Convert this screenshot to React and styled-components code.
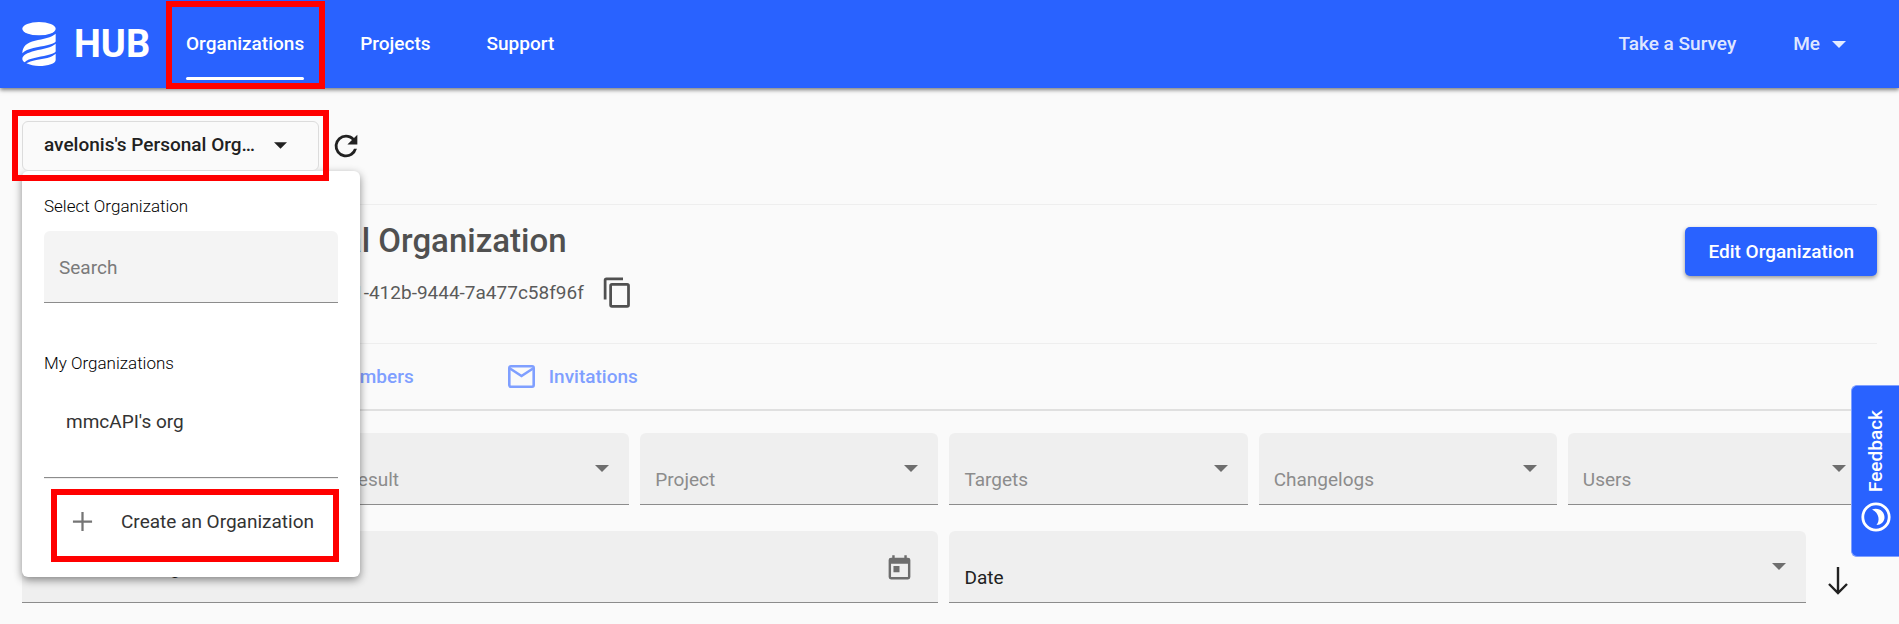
import React from "react";
import styled, { createGlobalStyle, css } from "styled-components";

const blue = "#2962ff";

const GlobalStyle = createGlobalStyle`
  * { box-sizing: border-box; }
  body {
    margin: 0;
    background: #fafafa;
    color: #212121;
    font-family: Roboto, "Liberation Sans", sans-serif;
    font-size: 19px;
    line-height: 24px;
    overflow-x: hidden;
  }
  button, input, select { font: inherit; color: inherit; }
  button { cursor: pointer; }
`;

const highlight = css`
  position: relative;
  &::after {
    content: "";
    position: absolute;
    inset: ${(p) => p.$ring};
    border: 6px solid #ff0000;
    pointer-events: none;
    z-index: 5;
  }
`;

const Header = styled.header`
  display: flex;
  align-items: center;
  height: 88px;
  padding: 0 53px 0 22px;
  background: ${blue};
  color: #fff;
  box-shadow: 0 2px 4px rgba(0, 0, 0, 0.5);
  font-weight: 500;
`;

const Brand = styled.a`
  display: flex;
  align-items: center;
  gap: 18px;
  width: 164px;
  color: inherit;
  text-decoration: none;
  font-size: 38px;
  line-height: 44px;
  font-weight: 700;
`;

const Nav = styled.nav`
  display: flex;
  flex: 1;
  gap: 56px;
`;

const NavLink = styled.a`
  display: flex;
  align-items: center;
  height: 88px;
  color: inherit;
  text-decoration: none;
  ${(p) => p.$ring && highlight}
  ${(p) =>
    p.$active &&
    css`
      &::before {
        content: "";
        position: absolute;
        left: 0;
        right: 0;
        bottom: 8px;
        height: 3px;
        border-radius: 2px;
        background: #fff;
      }
    `}
`;

const Account = styled.div`
  display: flex;
  align-items: center;
  gap: 57px;
  color: rgba(255, 255, 255, 0.87);
`;

const AccountButton = styled.button`
  display: flex;
  align-items: center;
  gap: 12px;
  padding: 0;
  border: 0;
  background: none;
`;

const Page = styled.main`
  padding: 33px 22px 20px;
`;

const Toolbar = styled.div`
  display: flex;
  align-items: center;
  gap: 10px;
  height: 83px;
  padding-bottom: 33px;
  position: relative;
`;

const OrgPicker = styled.div`
  ${highlight}
  z-index: 4;
`;

const OrgButton = styled.button`
  display: flex;
  align-items: center;
  gap: 17px;
  width: 297px;
  height: 50px;
  padding: 0 22px 2px 21px;
  border: 1px solid #dcdcdc;
  border-radius: 6px;
  background: #fafafa;
  font-weight: 500;
`;

const OrgName = styled.span`
  width: 213px;
  overflow: hidden;
  text-overflow: ellipsis;
  white-space: nowrap;
  text-align: left;
`;

const IconButton = styled.button`
  display: flex;
  padding: 0;
  border: 0;
  background: none;
  color: ${(p) => p.$color || "#212121"};
`;

const Menu = styled.section`
  position: absolute;
  top: 50px;
  left: 0;
  z-index: 3;
  width: 338px;
  height: 406px;
  padding: 22px;
  border-radius: 6px;
  background: #fff;
  box-shadow: 0 3px 8px rgba(0, 0, 0, 0.45);
  color: #333;
`;

const MenuHeading = styled.h2`
  margin: 0;
  padding-top: 1px;
  font-size: 17px;
  line-height: 24px;
  font-weight: 300;
  color: #000;
`;

const SearchInput = styled.input`
  display: block;
  width: 100%;
  height: 72px;
  margin: 13px 0 47px;
  padding: 2px 15px 0;
  border: 0;
  border-bottom: 1px solid #8c8c8c;
  border-radius: 6px 6px 0 0;
  background: #f4f4f4;
  outline: 0;
  &::placeholder {
    color: #7a7a7a;
    opacity: 1;
  }
`;

const MenuItem = styled.button`
  display: block;
  width: 100%;
  height: 68px;
  margin: 13px 0 21px;
  padding: 0 22px;
  border: 0;
  background: none;
  text-align: left;
`;

const MenuRule = styled.hr`
  margin: 0;
  height: 2px;
  border: 0;
  border-top: 1px solid #8c8c8c;
  border-bottom: 1px solid #eee;
`;

const CreateItem = styled.button`
  display: flex;
  align-items: center;
  gap: 25px;
  height: 62px;
  width: 276px;
  margin: 15px 0 0 13px;
  padding: 0 0 7px 12px;
  border: 0;
  background: none;
  white-space: nowrap;
  ${highlight}
`;

const Summary = styled.section`
  display: flex;
  justify-content: space-between;
  align-items: flex-start;
  height: 139px;
  padding: 16px 0 0 66px;
  border-top: 1px solid #eee;
`;

const Title = styled.h1`
  margin: 0;
  font-size: 33px;
  line-height: 40px;
  font-weight: 500;
  color: #505050;
`;

const OrgId = styled.div`
  display: flex;
  align-items: center;
  gap: 17px;
  padding: 15px 0 0 148px;
  color: #5a5a5a;
`;

const EditButton = styled.button`
  height: 49px;
  margin-top: 6px;
  padding: 0 23px;
  border: 0;
  border-radius: 5px;
  background: ${blue};
  color: #fff;
  font-weight: 500;
  box-shadow: 0 2px 4px rgba(0, 0, 0, 0.4);
`;

const Tabs = styled.nav`
  display: flex;
  align-items: center;
  gap: 94px;
  height: 68px;
  padding-left: 270px;
  border-top: 1px solid #eee;
  border-bottom: 2px solid #e0e0e0;
`;

const Tab = styled.a`
  display: flex;
  align-items: center;
  gap: 14px;
  color: #7f9fff;
  font-weight: 500;
  text-decoration: none;
`;

const Filters = styled.form`
  display: grid;
  grid-template-columns: repeat(6, 1fr);
  gap: 26px 11px;
  padding: 22px 11px 0 0;
`;

const Field = styled.label`
  display: grid;
  align-items: center;
  flex: 1;
  height: 72px;
  border-bottom: 1px solid #8c8c8c;
  border-radius: 6px 6px 0 0;
  background: #efefef;
  > * { grid-area: 1 / 1; }
  > svg, > button {
    justify-self: end;
    margin-right: ${(p) => (p.$wide ? 24 : 20)}px;
  }
  > button { padding-top: 4px; }
`;

const Select = styled.select`
  appearance: none;
  width: 100%;
  height: 100%;
  padding: 22px 50px 0 15px;
  border: 0;
  background: none;
  outline: 0;
  color: ${(p) => (p.$filled ? "#212121" : "#8c8c8c")};
`;

const DateInput = styled.input`
  width: 100%;
  height: 100%;
  padding: 2px 15px 0;
  border: 0;
  background: none;
  outline: 0;
`;

const DateRange = styled.div`
  grid-column: span 3;
`;

const SortGroup = styled.div`
  grid-column: span 3;
  display: flex;
  align-items: center;
  gap: 22px;
  padding-right: 18px;
`;

const SortButton = styled(IconButton)`
  padding-top: 27px;
`;

const Feedback = styled.button`
  position: fixed;
  top: 385px;
  right: 0;
  z-index: 6;
  display: flex;
  flex-direction: column;
  align-items: center;
  gap: 10px;
  width: 48px;
  padding: 24px 0 24px;
  border: 1px solid #7f9fff;
  border-right: 0;
  border-radius: 6px 0 0 6px;
  background: ${blue};
  color: #fff;
  font-weight: 500;
`;

const Vertical = styled.span`
  writing-mode: vertical-rl;
  transform: rotate(180deg);
`;

const Caret = ({ width = 14, color = "currentColor" }) => (
  <svg width={width} height="7" viewBox="0 0 14 7" fill={color} aria-hidden="true">
    <path d="M0 0h14L7 7z" />
  </svg>
);

const Logo = () => (
  <svg width="34" height="44" viewBox="0 0 100 132" fill="#fff" aria-hidden="true">
    <ellipse cx="50" cy="20" rx="50" ry="20" />
    <path d="M100 35C88 47 62 50 38 56C14 62 0 72 0 94C14 78 50 76 74 70C90 66 100 62 100 58Z" />
    <path d="M100 65C88 77 62 80 38 86C14 92 0 100 0 110C0 115 3 118 7 121C20 108 50 106 74 100C90 96 100 92 100 88Z" />
    <path d="M100 95C88 107 64 110 42 114C28 117 19 120 12 124C22 129 37 132 50 132C78 132 100 125 100 114Z" />
  </svg>
);

const Refresh = () => (
  <svg width="34" height="34" viewBox="0 0 24 24" fill="currentColor" aria-hidden="true">
    <path d="M17.65 6.35A7.96 7.96 0 0 0 12 4a8 8 0 1 0 7.73 10h-2.08A6 6 0 1 1 12 6c1.66 0 3.14.69 4.22 1.78L13 11h7V4z" />
  </svg>
);

const Copy = () => (
  <svg width="33" height="33" viewBox="0 0 24 24" fill="currentColor" aria-hidden="true">
    <path d="M16 1H4a2 2 0 0 0-2 2v14h2V3h12zm3 4H8a2 2 0 0 0-2 2v14a2 2 0 0 0 2 2h11a2 2 0 0 0 2-2V7a2 2 0 0 0-2-2m0 16H8V7h11z" />
  </svg>
);

const Mail = () => (
  <svg width="27" height="23" viewBox="0 0 27 23" fill="none" stroke="currentColor" strokeWidth="2.6" aria-hidden="true">
    <rect x="1.3" y="1.3" width="24.4" height="20.4" rx="1.6" />
    <path d="M2 3.5L13.5 11L25 3.5" />
  </svg>
);

const Calendar = () => (
  <svg width="29" height="29" viewBox="0 0 24 24" fill="currentColor" aria-hidden="true">
    <path d="M19 3h-1V1h-2v2H8V1H6v2H5a2 2 0 0 0-2 2v14a2 2 0 0 0 2 2h14a2 2 0 0 0 2-2V5a2 2 0 0 0-2-2m0 16H5V8h14zM7 10h5v5H7z" />
  </svg>
);

const Plus = () => (
  <svg width="27" height="27" viewBox="0 0 24 24" fill="#757575" aria-hidden="true">
    <path d="M20.5 13H13v7.500h-2V13H3.500v-2H11V3.500h2V11h7.500z" />
  </svg>
);

const ArrowDown = () => (
  <svg width="20" height="28" viewBox="0 0 20 28" fill="none" stroke="currentColor" strokeWidth="2.400" aria-hidden="true">
    <path d="M10 0V26M1 17L10 26L19 17" />
  </svg>
);

const Moon = () => (
  <svg width="30" height="30" viewBox="0 0 30 30" aria-hidden="true">
    <circle cx="15" cy="15" r="13.200" fill="none" stroke="#fff" strokeWidth="2.800" />
    <path d="M11 7.500C18 5 24 10 23.500 16C23 20 20 23 15.500 23C19 19 18.500 11 11 7.500Z" fill="#fff" />
  </svg>
);

const filters = ["Type", "Result", "Project", "Targets", "Changelogs", "Users"];

function FilterSelect({ name, filled }) {
  return (
    <Field>
      <Select aria-label={name} $filled={filled} defaultValue={name}>
        <option>{name}</option>
      </Select>
      <Caret color="#6e6e6e" />
    </Field>
  );
}

export default function App() {
  return (
    <>
      <GlobalStyle />
      <Header>
        <Brand href="#">
          <Logo />
          HUB
        </Brand>
        <Nav>
          <NavLink href="#organizations" $active $ring="1px -21px -1px -20px">
            Organizations
          </NavLink>
          <NavLink href="#projects">Projects</NavLink>
          <NavLink href="#support">Support</NavLink>
        </Nav>
        <Account>
          <NavLink href="#survey">Take a Survey</NavLink>
          <AccountButton>
            Me
            <Caret />
          </AccountButton>
        </Account>
      </Header>
      <Page>
        <Toolbar>
          <OrgPicker $ring="-11px -10px -10px -10px">
            <OrgButton>
              <OrgName>avelonis's Personal Organization</OrgName>
              <Caret width={13} />
            </OrgButton>
          </OrgPicker>
          <IconButton aria-label="Refresh">
            <Refresh />
          </IconButton>
          <Menu>
            <MenuHeading>Select Organization</MenuHeading>
            <SearchInput aria-label="Search" placeholder="Search" />
            <MenuHeading>My Organizations</MenuHeading>
            <MenuItem>mmcAPI's org</MenuItem>
            <MenuRule />
            <CreateItem $ring="-5px -6px -6px -6px">
              <Plus />
              Create an Organization
            </CreateItem>
          </Menu>
        </Toolbar>
        <Summary>
          <div>
            <Title>avelonis's Personal Organization</Title>
            <OrgId>
              <span>5d2f8a1c-63e1-412b-9444-7a477c58f96f</span>
              <IconButton aria-label="Copy organization id" $color="#505050">
                <Copy />
              </IconButton>
            </OrgId>
          </div>
          <EditButton>Edit Organization</EditButton>
        </Summary>
        <Tabs>
          <Tab href="#members">
            <Mail />
            Members
          </Tab>
          <Tab href="#invitations">
            <Mail />
            Invitations
          </Tab>
        </Tabs>
        <Filters>
          {filters.map((name) => (
            <FilterSelect key={name} name={name} />
          ))}
          <DateRange>
            <Field $wide>
              <DateInput aria-label="Date range" defaultValue="Enter a date range" />
              <IconButton type="button" aria-label="Open calendar" $color="#6e6e6e">
                <Calendar />
              </IconButton>
            </Field>
          </DateRange>
          <SortGroup>
            <FilterSelect name="Date" filled />
            <SortButton type="button" aria-label="Sort descending">
              <ArrowDown />
            </SortButton>
          </SortGroup>
        </Filters>
      </Page>
      <Feedback>
        <Vertical>Feedback</Vertical>
        <Moon />
      </Feedback>
    </>
  );
}
